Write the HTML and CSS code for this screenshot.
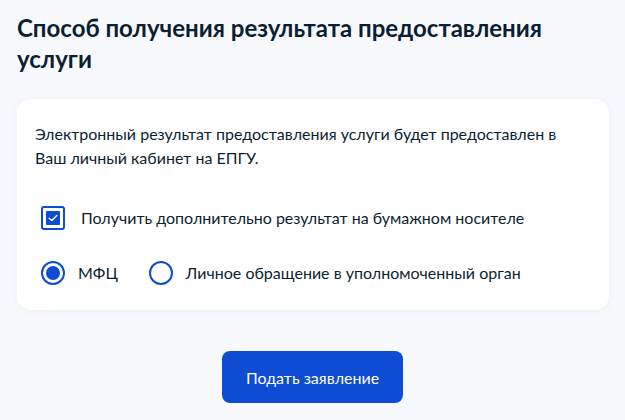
FILE: index.html
```html
<!DOCTYPE html>
<html lang="ru">
<head>
<meta charset="utf-8">
<link rel="stylesheet" href="styles.css">
</head>
<body>
<div class="page">
  <h1 class="title">Способ получения результата предоставления услуги</h1>
  <div class="card">
    <p class="info">Электронный результат предоставления услуги будет предоставлен в Ваш личный кабинет на ЕПГУ.</p>
    <label class="check-row">
      <span class="checkbox"><span class="checkbox-inner"><svg width="10" height="8" viewBox="0 0 10 8"><path d="M1.2 4.2 L3.8 6.6 L8.8 1.4" fill="none" stroke="#fff" stroke-width="1.4" stroke-linecap="round" stroke-linejoin="round"/></svg></span></span>
      <span class="check-label">Получить дополнительно результат на бумажном носителе</span>
    </label>
    <div class="radio-row">
      <label class="radio-item">
        <span class="radio radio-on"></span>
        <span class="radio-label">МФЦ</span>
      </label>
      <label class="radio-item">
        <span class="radio"></span>
        <span class="radio-label">Личное обращение в уполномоченный орган</span>
      </label>
    </div>
  </div>
  <div class="actions">
    <button class="submit">Подать заявление</button>
  </div>
</div>
</body>
</html>
```
FILE: styles.css
```css
html, body {
  margin: 0;
  padding: 0;
  background: #f8f9fd;
}
body {
  font-family: Lato, "Noto Sans", sans-serif;
  color: #0b1f33;
}
.page {
  padding: 12px 16px 0 17px;
  width: 592px;
}
.title {
  margin: 0;
  font-size: 24px;
  line-height: 31px;
  font-weight: 700;
  width: 560px;
}
.card {
  margin-top: 25px;
  background: #fff;
  border-radius: 14px;
  box-shadow: 0 1px 6px rgba(30, 60, 150, 0.06);
  padding: 23px 18px 25px 18px;
}
.info {
  margin: 0;
  font-size: 16px;
  line-height: 24px;
}
.check-row {
  display: flex;
  align-items: center;
  margin-top: 36px;
  margin-left: 6px;
}
.checkbox {
  box-sizing: border-box;
  width: 24px;
  height: 24px;
  border: 2px solid #0d4cd3;
  border-radius: 3px;
  display: flex;
  align-items: center;
  justify-content: center;
}
.checkbox-inner {
  width: 14px;
  height: 14px;
  background: #0d4cd3;
  border-radius: 1px;
  display: flex;
  align-items: center;
  justify-content: center;
}
.check-label {
  margin-left: 16px;
  font-size: 16px;
  line-height: 24px;
}
.radio-row {
  display: flex;
  align-items: center;
  margin-top: 31px;
  margin-left: 6px;
}
.radio-item {
  display: flex;
  align-items: center;
}
.radio-item + .radio-item {
  margin-left: 31px;
}
.radio {
  box-sizing: border-box;
  width: 24px;
  height: 24px;
  border: 2px solid #0d4cd3;
  border-radius: 50%;
  display: flex;
  align-items: center;
  justify-content: center;
}
.radio-on::after {
  content: "";
  width: 14px;
  height: 14px;
  border-radius: 50%;
  background: #0d4cd3;
}
.radio-label {
  margin-left: 13px;
  font-size: 16px;
  line-height: 24px;
}
.actions {
  display: flex;
  justify-content: center;
  margin-top: 41px;
  padding-right: 1px;
}
.submit {
  width: 181px;
  height: 52px;
  border: none;
  border-radius: 8px;
  background: #0d4cd3;
  color: #fff;
  font-family: Lato, "Noto Sans", sans-serif;
  font-size: 16px;
  font-weight: 400;
}
```
